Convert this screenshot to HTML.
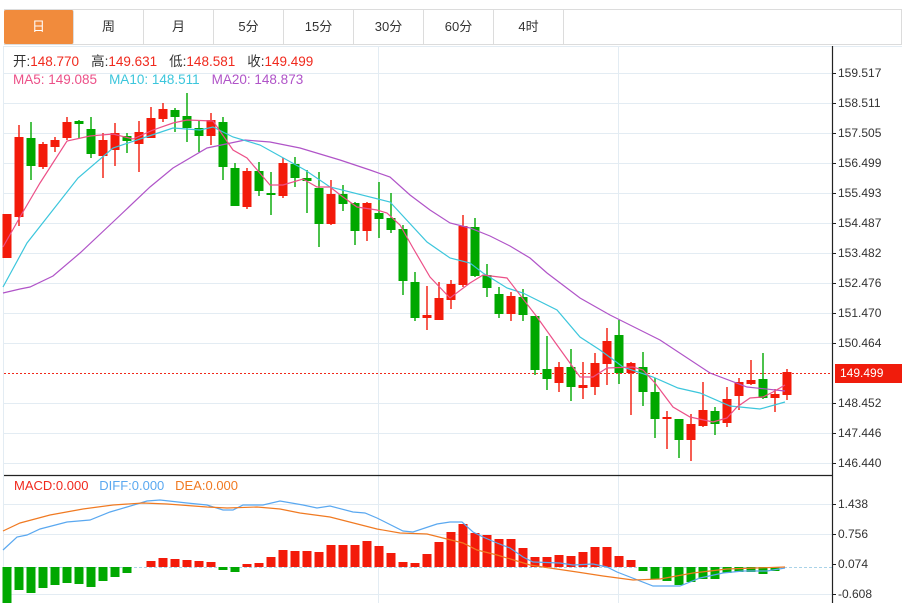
<!DOCTYPE html>
<html><head><meta charset="utf-8"><style>
*{margin:0;padding:0;box-sizing:border-box}
body{width:905px;height:603px;overflow:hidden;background:#fff;font-family:"Liberation Sans","Noto Sans CJK SC",sans-serif;position:relative}
.box{position:absolute;left:4px;top:9px;width:898px;height:36px;border:1px solid #dcdcdc}
.tab{position:absolute;top:10px;height:34px;width:70px;border-right:1px solid #dcdcdc;font-size:13px;color:#333;text-align:center;line-height:34px}
.tab.on{background:#f18b3c;color:#fff;border-radius:2px}
.t{position:absolute;font-size:13.5px;white-space:nowrap;line-height:16px}
.ax{position:absolute;left:838px;font-size:12px;color:#333}
</style></head><body>
<div class="box"></div>
<div class="tab on" style="left:4px">日</div>
<div class="tab" style="left:74px">周</div>
<div class="tab" style="left:144px">月</div>
<div class="tab" style="left:214px">5分</div>
<div class="tab" style="left:284px">15分</div>
<div class="tab" style="left:354px">30分</div>
<div class="tab" style="left:424px">60分</div>
<div class="tab" style="left:494px">4时</div>
<svg width="905" height="603" style="position:absolute;left:0;top:0">
<g stroke="#e3ecf3" stroke-width="1">
<path d="M4 46.5H902M4 73.5H832M4 103.5H832M4 133.5H832M4 163.5H832M4 193.5H832M4 223.5H832M4 253.5H832M4 283.5H832M4 313.5H832M4 343.5H832M4 403.5H832M4 433.5H832M4 463.5H832"/>
<path d="M4 504.5H832M4 534.5H832M4 594.5H832"/>
<path d="M378.5 46V603M618.5 46V603M3.5 46V603"/>
</g>
<path d="M4 567.5H832" stroke="#a9d3e8" stroke-dasharray="3,2"/>
<path d="M832.5 46V603M4 475.5H832" stroke="#222" stroke-width="1.2"/>
<path d="M832 73.5h4M832 103.5h4M832 133.5h4M832 163.5h4M832 193.5h4M832 223.5h4M832 253.5h4M832 283.5h4M832 313.5h4M832 343.5h4M832 403.5h4M832 433.5h4M832 463.5h4M832 504.5h4M832 534.5h4M832 564.5h4M832 594.5h4" stroke="#222"/>
<path d="M4 373.5H832" stroke="#f0281a" stroke-dasharray="2,2"/>
<rect x="835" y="364" width="67" height="19" fill="#f01c0c"/>
<g stroke="#f31a0a" stroke-width="1.4" fill="none">
<path d="M7 214V258M19 125V226M43 142V169M55 137V152M67 117V140M103 133V178M115 123V166M139 121V172M151 107V138M163 103V122M211 113V145M247 168V209M283 158V198M331 180V225M367 202V241M427 286V330M439 282V320M451 280V309M463 215V287M511 292V321M559 362V392M583 362V399M595 353V395M607 328V385M631 362V415M667 411V449M691 414V461M703 382V427M727 387V427M739 378V410M751 360V385M775 389V412M787 369V400"/>
</g>
<path fill="#f31a0a" d="M2.5 214h9V258h-9zM14.5 137h9V217h-9zM38.5 144h9V167h-9zM50.5 140h9V147h-9zM62.5 122h9V138h-9zM98.5 140h9V156h-9zM110.5 133h9V150h-9zM134.5 132h9V144h-9zM146.5 118h9V138h-9zM158.5 109h9V119h-9zM206.5 120h9V136h-9zM242.5 171h9V207h-9zM278.5 163h9V196h-9zM326.5 194h9V224h-9zM362.5 203h9V231h-9zM422.5 315h9V318h-9zM434.5 298h9V320h-9zM446.5 284h9V300h-9zM458.5 226h9V285h-9zM506.5 296h9V314h-9zM554.5 367h9V383h-9zM578.5 385h9V388h-9zM590.5 363h9V387h-9zM602.5 341h9V364h-9zM626.5 363h9V373h-9zM662.5 417h9V419h-9zM686.5 424h9V440h-9zM698.5 410h9V426h-9zM722.5 399h9V423h-9zM734.5 382h9V396h-9zM746.5 380h9V384h-9zM770.5 394h9V398h-9zM782.5 372h9V395h-9z"/>
<g stroke="#00a800" stroke-width="1.4" fill="none">
<path d="M31 122V180M79 120V138M91 117V158M127 133V153M175 108V132M187 93V142M199 120V152M223 117V180M235 163V206M259 162V196M271 172V215M295 157V187M307 170V213M319 172V247M343 185V211M355 202V245M379 182V238M391 193V233M403 225V295M415 272V321M475 218V277M487 264V297M499 287V318M523 289V321M535 316V375M547 336V390M571 349V401M619 320V384M643 352V406M655 378V438M679 419V458M715 407V435M763 353V399"/>
</g>
<path fill="#00a800" d="M26.5 138h9V166h-9zM74.5 121h9V124h-9zM86.5 129h9V154h-9zM122.5 136h9V141h-9zM170.5 110h9V117h-9zM182.5 116h9V128h-9zM194.5 128h9V136h-9zM218.5 122h9V167h-9zM230.5 168h9V206h-9zM254.5 171h9V191h-9zM266.5 193h9V195h-9zM290.5 164h9V178h-9zM302.5 178h9V181h-9zM314.5 188h9V224h-9zM338.5 194h9V204h-9zM350.5 203h9V231h-9zM374.5 213h9V219h-9zM386.5 218h9V230h-9zM398.5 229h9V281h-9zM410.5 282h9V318h-9zM470.5 227h9V276h-9zM482.5 275h9V288h-9zM494.5 294h9V314h-9zM518.5 297h9V315h-9zM530.5 316h9V370h-9zM542.5 369h9V379h-9zM566.5 367h9V387h-9zM614.5 335h9V373h-9zM638.5 367h9V392h-9zM650.5 392h9V419h-9zM674.5 419h9V440h-9zM710.5 411h9V424h-9zM758.5 379h9V398h-9z"/>
<g fill="none" stroke-width="1.2">
<polyline stroke="#b054c8" points="3,293 20,289 30,287 53,276 80,253 113,222 150,187 173,168 207,148 245,140 270,142 300,148 340,160 370,170 390,177 410,195 430,210 450,223 470,228 490,236 510,246 530,258 547,273 580,298 610,315 660,340 710,373 747,387 785,391"/>
<polyline stroke="#3cc6dc" points="3,287 27,243 78,178 113,148 143,138 173,128 200,130 213,127 233,137 260,145 305,170 330,187 390,202 427,242 450,258 470,263 483,273 507,288 523,293 557,310 580,337 600,350 623,367 653,377 678,388 700,393 730,406 760,409 785,402"/>
<polyline stroke="#ec5088" points="3,247 20,217 40,183 67,141 90,136 113,134 133,139 153,130 173,123 187,120 213,121 233,150 247,158 270,185 283,185 303,179 317,187 330,187 343,197 357,207 377,210 387,213 400,225 413,248 430,277 450,298 470,283 483,275 507,278 537,317 557,345 580,377 593,377 607,368 633,367 643,370 655,383 673,407 690,417 713,422 727,418 737,407 750,398 763,397 773,392 785,385"/>
</g>
<path fill="#00a800" d="M2.5 567h9V603h-9zM14.5 567h9V590h-9zM26.5 567h9V593h-9zM38.5 567h9V588h-9zM50.5 567h9V585h-9zM62.5 567h9V583h-9zM74.5 567h9V584h-9zM86.5 567h9V587h-9zM98.5 567h9V581h-9zM110.5 567h9V577h-9zM122.5 567h9V573h-9zM218.5 567h9V570h-9zM230.5 567h9V572h-9zM638.5 567h9V571h-9zM650.5 567h9V579h-9zM662.5 567h9V581h-9zM674.5 567h9V585h-9zM686.5 567h9V582h-9zM698.5 567h9V579h-9zM710.5 567h9V579h-9zM722.5 567h9V573h-9zM734.5 567h9V572h-9zM746.5 567h9V572h-9zM758.5 567h9V574h-9zM770.5 567h9V571h-9z"/>
<path fill="#f31a0a" d="M146.5 561h9V567h-9zM158.5 558h9V567h-9zM170.5 559h9V567h-9zM182.5 560h9V567h-9zM194.5 561h9V567h-9zM206.5 562h9V567h-9zM242.5 564h9V567h-9zM254.5 563h9V567h-9zM266.5 557h9V567h-9zM278.5 550h9V567h-9zM290.5 551h9V567h-9zM302.5 551h9V567h-9zM314.5 552h9V567h-9zM326.5 545h9V567h-9zM338.5 545h9V567h-9zM350.5 545h9V567h-9zM362.5 541h9V567h-9zM374.5 546h9V567h-9zM386.5 553h9V567h-9zM398.5 562h9V567h-9zM410.5 563h9V567h-9zM422.5 554h9V567h-9zM434.5 542h9V567h-9zM446.5 532h9V567h-9zM458.5 524h9V567h-9zM470.5 533h9V567h-9zM482.5 535h9V567h-9zM494.5 539h9V567h-9zM506.5 539h9V567h-9zM518.5 548h9V567h-9zM530.5 557h9V567h-9zM542.5 557h9V567h-9zM554.5 555h9V567h-9zM566.5 556h9V567h-9zM578.5 552h9V567h-9zM590.5 547h9V567h-9zM602.5 547h9V567h-9zM614.5 556h9V567h-9zM626.5 560h9V567h-9z"/>
<g fill="none" stroke-width="1.2">
<polyline stroke="#5aa8f0" points="3,550 17,537 27,535 40,529 67,522 90,520 110,512 127,507 147,501 160,500 187,503 207,505 223,510 233,510 243,505 263,505 280,501 303,505 317,508 330,506 353,512 365,513 377,518 403,531 413,532 437,524 450,522 462,522 473,532 483,537 497,543 510,548 523,557 533,562 560,563 573,565 593,564 607,567 617,572 653,586 680,586 700,578 723,573 743,571 767,571 785,568"/>
<polyline stroke="#f07a22" points="3,531 20,523 50,515 83,509 113,505 143,503 167,504 207,507 227,508 257,507 280,509 300,513 330,517 377,529 400,533 427,534 443,538 463,543 477,550 497,555 517,561 530,565 543,567 577,572 603,576 633,580 660,579 693,573 727,569 785,567"/>
</g>
</svg>
<div class="t" style="left:13px;top:54px;color:#333">开:<span style="color:#f0291d">148.770</span><span style="display:inline-block;width:12px"></span>高:<span style="color:#f0291d">149.631</span><span style="display:inline-block;width:12px"></span>低:<span style="color:#f0291d">148.581</span><span style="display:inline-block;width:12px"></span>收:<span style="color:#f0291d">149.499</span></div>
<div class="t" style="left:13px;top:72px"><span style="color:#ec5088">MA5: 149.085</span><span style="display:inline-block;width:12px"></span><span style="color:#3cc6dc">MA10: 148.511</span><span style="display:inline-block;width:12px"></span><span style="color:#b054c8">MA20: 148.873</span></div>
<div class="t" style="left:14px;top:478px;font-size:13px"><span style="color:#f0291d">MACD:0.000</span>&nbsp;&nbsp; <span style="color:#5aa8f0">DIFF:0.000</span>&nbsp;&nbsp; <span style="color:#f07a22">DEA:0.000</span></div>
<div class="ax" style="top:66px">159.517</div>
<div class="ax" style="top:96px">158.511</div>
<div class="ax" style="top:126px">157.505</div>
<div class="ax" style="top:156px">156.499</div>
<div class="ax" style="top:186px">155.493</div>
<div class="ax" style="top:216px">154.487</div>
<div class="ax" style="top:246px">153.482</div>
<div class="ax" style="top:276px">152.476</div>
<div class="ax" style="top:306px">151.470</div>
<div class="ax" style="top:336px">150.464</div>
<div class="ax" style="top:366px;left:840px;color:#fff">149.499</div>
<div class="ax" style="top:396px">148.452</div>
<div class="ax" style="top:426px">147.446</div>
<div class="ax" style="top:456px">146.440</div>
<div class="ax" style="top:497px">1.438</div>
<div class="ax" style="top:527px">0.756</div>
<div class="ax" style="top:557px">0.074</div>
<div class="ax" style="top:587px">-0.608</div>
</body></html>
